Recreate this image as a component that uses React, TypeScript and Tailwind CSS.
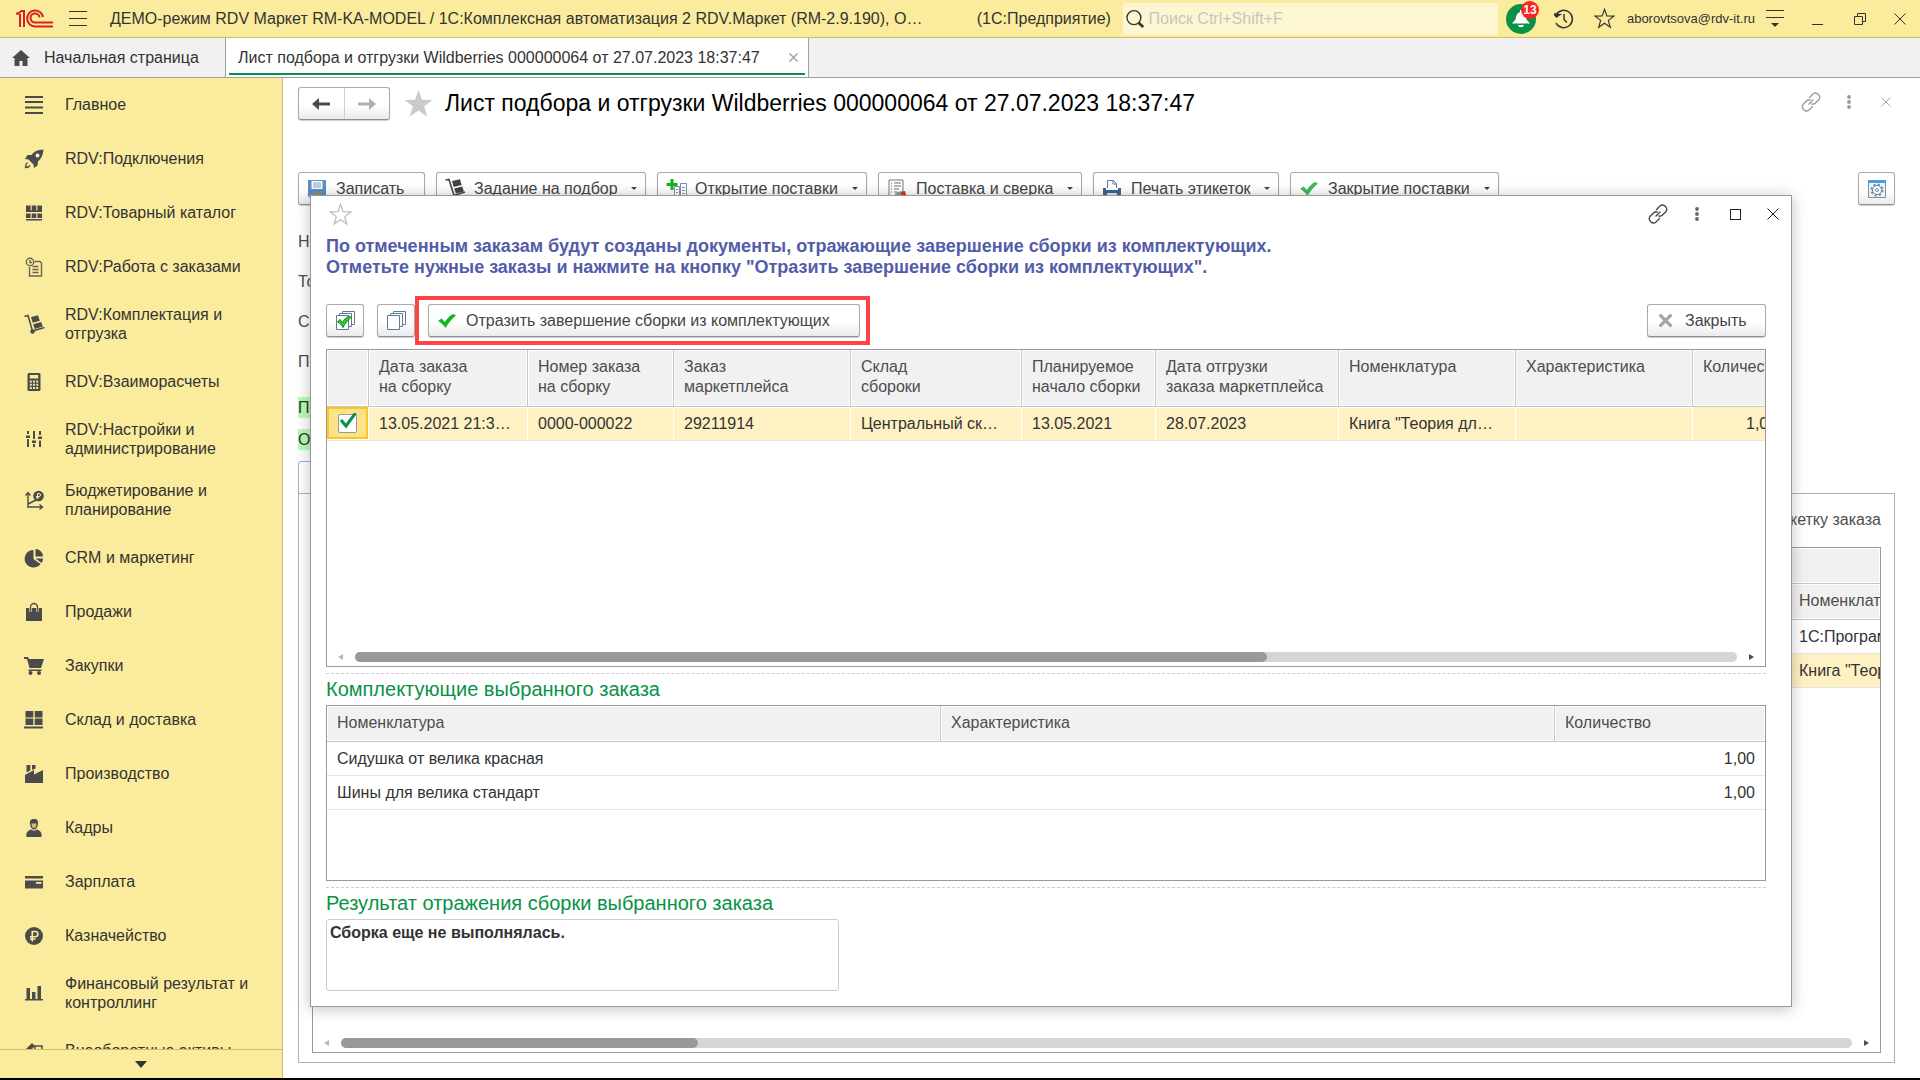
import React from 'react';

interface IconProps {
  className?: string;
}

interface MenuItem {
  label: string;
  icon: React.ReactNode;
}

const menuItems: MenuItem[] = [
  { label: 'Главное', icon: <path d="M0 0h18v2H0zM0 5h18v2H0zM0 10.500h18v2H0zM0 16h18v2H0z" /> },
  {
    label: 'RDV:Подключения',
    icon: (
      <>
        <path d="M18.500-.5c-6 .4-9.500 2-12 5.500L2.500 5 0 9l3.500.5 5 5 .5 3.500 3.500-2.500L13 11.500c3-2.500 5.200-6.500 5.500-12z" />
        <circle cx="12.500" cy="5.500" r="1.900" fill="#fff" />
        <path d="M2.500 12.500c-1.500 1-2 3-2 5 2 0 3.500-.5 4.500-2" fill="none" stroke="#4b4b4b" strokeWidth="1.400" />
      </>
    ),
  },
  {
    label: 'RDV:Товарный каталог',
    icon: <path d="M1 1.500h4.600v5H1zM6.700 1.500h4.600v5H6.700zM12.400 1.500H17v5h-4.600zM1 6.500h16V8H1zM1 9.500h4.600V14H1zM6.700 9.500h4.600V14H6.700zM12.400 9.500H17V14h-4.600zM1 15h16v1.500H1z" />,
  },
  {
    label: 'RDV:Работа с заказами',
    icon: (
      <g fill="none" stroke="#6b6550" strokeWidth="1.400">
        <circle cx="5" cy="4" r="3.700" />
        <path d="M5 2v2.500h2M9.500 3.500h5.500l1.500 1.500v13h-12V9M7.500 8.500h6M7.500 11.500h6M7.500 14.500h6" />
      </g>
    ),
  },
  {
    label: 'RDV:Комплектация и отгрузка',
    icon: (
      <>
        <path d="M-.5 1.500L3 .5l4.500 15.500 12-3.500" fill="none" stroke="#4b4b4b" strokeWidth="1.500" />
        <path d="M6 2l7-1.700 1.800 5.500L7.700 7.700zM8.200 9.300l8-2.200 1.600 4.500-8.200 2.500z" />
        <circle cx="7.500" cy="16.500" r="2.200" />
      </>
    ),
  },
  {
    label: 'RDV:Взаиморасчеты',
    icon: (
      <>
        <rect x="2.500" width="13" height="18" rx="1.500" />
        <path d="M4.800 2h8.400v3.500H4.800zM4.800 7.500h2v2h-2zM8 7.500h2v2H8zM11.200 7.500h2v2h-2zM4.800 10.800h2v2h-2zM8 10.800h2v2H8zM11.200 10.800h2v2h-2zM4.800 14h2v2h-2zM8 14h2v2H8zM11.200 14h2v2h-2z" fill="#fbec9d" />
      </>
    ),
  },
  {
    label: 'RDV:Настройки и администрирование',
    icon: <path d="M2 1h2v3H2zM1 5.500h4v2.500H1zM2 9h2v8H2zM8 1h2v8H8zM7 10.500h4V13H7zM8 14h2v3H8zM14 1h2v4h-2zM13 6.500h4V9h-4zM14 10.500h2V17h-2z" />,
  },
  {
    label: 'Бюджетирование и планирование',
    icon: (
      <>
        <path d="M3 17V2M.5 4.500L3 1.500l2.500 3M3 16h14M14.500 13.500L17.500 16l-3 2.500M3 13l9-4.500" fill="none" stroke="#4b4b4b" strokeWidth="1.400" />
        <circle cx="13.500" cy="5" r="5.300" />
        <path d="M12.500 7.800V2.500h1.500a1.500 1.500 0 010 3h-3M11 6.800h3" fill="none" stroke="#fbec9d" />
      </>
    ),
  },
  {
    label: 'CRM и маркетинг',
    icon: <path d="M8.500 1v9l7 5A8.800 8.800 0 118.500 1zM10.500 0A7.500 7.500 0 0118 7.500h-7.500zM10.500 9.500H18a7 7 0 01-1.500 4.500z" />,
  },
  {
    label: 'Продажи',
    icon: (
      <>
        <path d="M1 5h16v13H1z" />
        <path d="M5.500 8.500V4a3.500 3.500 0 017 0v4.500" fill="none" stroke="#fbec9d" strokeWidth="2.600" />
        <path d="M5.500 8V4a3.500 3.500 0 017 0v4" fill="none" stroke="#4b4b4b" strokeWidth="1.300" />
      </>
    ),
  },
  {
    label: 'Закупки',
    icon: (
      <>
        <path d="M-1 0h4l1 2h15l-3 9H4.500L2 2h-3zM3.500 12.500h13V14h-13z" />
        <circle cx="5.500" cy="16" r="2" />
        <circle cx="14" cy="16" r="2" />
      </>
    ),
  },
  { label: 'Склад и доставка', icon: <path d="M.5 0h7.800v6.500H.5zM9.700 0h7.800v6.500H9.700zM.5 7.500h7.800V14H.5zM9.700 7.500h7.800V14H9.700zM-1 15.500h19v2H-1z" /> },
  { label: 'Производство', icon: <path d="M1.500 0h3.800v5.500L1.500 7.500zM7 0h3.500v3.500L7 5zM0 18V10l9-5v4.500L18 5v13z" /> },
  {
    label: 'Кадры',
    icon: (
      <>
        <path d="M9 0c3.500 0 4.500 2 4 5-.4 3.500-2 5.500-4 5.500S5.400 8.500 5 5C4.500 2 5.500 0 9 0zM1.500 18c-.5-4 .5-6 4.500-7.500 2 1.500 4 1.500 6 0 4 1.500 5 3.500 4.500 7.500z" />
        <path d="M6.500 4.500h5c0 3-1 4.500-2.500 4.500S6.500 7.500 6.500 4.500z" fill="#c9be83" />
      </>
    ),
  },
  {
    label: 'Зарплата',
    icon: (
      <>
        <path d="M0 3h18v2.500H0zM0 7.500h18v8H0z" />
        <path d="M11 9h5.500v1.800H11z" fill="#fbec9d" />
      </>
    ),
  },
  {
    label: 'Казначейство',
    icon: (
      <>
        <circle cx="9" cy="9" r="9" />
        <path d="M7.300 14.500V4.500h3a2.600 2.600 0 010 5.200H5M5 12h5.500" fill="none" stroke="#fbec9d" strokeWidth="1.600" />
      </>
    ),
  },
  { label: 'Финансовый результат и контроллинг', icon: <path d="M1.500 4H5v11H1.500zM7 8h3.500v7H7zM12.500 2H16v13h-3.500zM0 15h18v1.500H0z" /> },
  {
    label: 'Внеоборотные активы',
    icon: (
      <>
        <path d="M1 7l6-6 3 3-6 6z" />
        <path d="M10 4h7v6h-7z" fill="none" stroke="#4b4b4b" strokeWidth="1.500" />
      </>
    ),
  },
];

const GRAY_BTN =
  'flex h-[33px] shrink-0 items-center rounded-[3px] border border-[#aaa] border-b-[#8f8f8f] bg-linear-to-b from-white from-55% to-[#ebebeb] text-[#444] shadow-[0_1px_1px_rgba(0,0,0,0.2)]';

const LogoIcon = () => (
  <svg width="38" height="20" viewBox="0 0 38 20" fill="none" stroke="#d8201f" strokeWidth="2">
    <path d="M0 4.500h3M4 18V5M1 5.500L5.500 2H8v16" />
    <path d="M27 8A8 8 0 1019 17.500h18" />
    <path d="M23.500 8.500a4.500 4.500 0 10-4.500 5h18" />
  </svg>
);

const LinkIcon = ({ className }: IconProps) => (
  <svg width="20" height="20" viewBox="0 0 20 20" className={className} fill="none" stroke="currentColor" strokeWidth="1.300" strokeLinecap="round">
    <path d="M8.500 5.500L12 2c3.500-3 8.500 2 6 5.500L14.500 11c-1.200 1.200-2.500 1.500-4 1" />
    <path d="M11.500 14.500L8 18c-3.500 3-8.500-2-6-5.500L5.500 9c1-1 2.500-1.500 4-1" />
    <path d="M8 12l4-4" />
  </svg>
);

const DotsIcon = ({ className }: IconProps) => (
  <svg width="4" height="14" viewBox="0 0 4 14" className={className} fill="currentColor">
    <circle cx="2" cy="2" r="1.900" />
    <circle cx="2" cy="7" r="1.900" />
    <circle cx="2" cy="12" r="1.900" />
  </svg>
);

const CrossIcon = ({ className }: IconProps) => (
  <svg viewBox="0 0 12 12" className={className} fill="none" stroke="currentColor">
    <path d="M.5.5l11 11M11.500.5l-11 11" />
  </svg>
);

const StarIcon = ({ className }: IconProps) => (
  <svg viewBox="0 0 24 24" className={className} strokeWidth="1.300">
    <path d="M12 1.500l2.700 7.600 8 .2-6.300 4.900 2.300 7.800-6.700-4.600L5.300 22l2.300-7.800L1.300 9.300l8-.2z" />
  </svg>
);

const CheckIcon = ({ className }: IconProps) => (
  <svg width="18" height="14" viewBox="0 0 18 14" className={className} fill="currentColor">
    <path d="M0 7l3.500-2.500L7 8c2-3.500 4.500-6 8-8l3 1.500C13.500 5 10.500 9 7.500 14 5.500 11 3 8.500 0 7z" />
  </svg>
);

const StackIcon = ({ checked }: { checked?: boolean }) => (
  <svg width="19" height="19" viewBox="0 0 19 19" fill="#fff" stroke="#5b7c96">
    <path d="M6.500.5h12v13h-12z" />
    <path d="M3.500 2.500h12v13h-12z" />
    <path d="M.5 4.500h12v14H.5z" />
    {checked && <path d="M1.500 11l2.500-2.500 2.500 3c1.500-3 4-5.500 7-6.500l1.500 1.500c-3.500 2.500-6 6-8 10-1.500-2.500-3-4.500-5.500-5.500z" fill="#2fd321" stroke="#127a0c" />}
  </svg>
);

const toolbar = [
  {
    label: 'Записать',
    width: 'w-[127px]',
    menu: false,
    icon: (
      <>
        <path d="M0 0h18v18H2l-2-2z" fill="#5b8ec4" />
        <path d="M3.500 1h11v8h-11z" fill="#fff" />
        <path d="M5 3h8M5 5h8M5 7h8" stroke="#7a9dc0" />
        <path d="M4 12h10v6H4z" fill="#8a8a8a" />
      </>
    ),
  },
  {
    label: 'Задание на подбор',
    width: 'w-[210px]',
    menu: true,
    icon: (
      <>
        <path d="M-.5 0L3-.5l5 16 11-3.500" fill="none" stroke="#444" strokeWidth="1.600" />
        <path d="M6 1l8-1.700 1.700 5.700-8 2zM8.200 8.500l8-2 1.700 5-8 2z" fill="#444" />
        <circle cx="8" cy="16.500" r="2" fill="#555" />
      </>
    ),
  },
  {
    label: 'Открытие поставки',
    width: 'w-[210px]',
    menu: true,
    icon: (
      <>
        <path d="M7.500 6.500h5v13h-5zM13.500 3.500h6v16h-6z" fill="#fff" stroke="#8094a6" />
        <path d="M9 9.500h2M9 12.500h2M15 7.500h3M15 10.500h3M15 13.500h3" stroke="#8094a6" />
        <path d="M3.500-1h3v4h4v3h-4v4h-3V6h-4V3h4z" fill="#16b41c" />
      </>
    ),
  },
  {
    label: 'Поставка и сверка',
    width: 'w-[204px]',
    menu: true,
    icon: (
      <>
        <path d="M1 0h14v18H1z" fill="#fff" stroke="#777" />
        <path d="M3 3h1M3 6h1M3 9h1M3 12h1M6 3h7M6 6h7M6 9h5M6 12h3" stroke="#777" />
        <path d="M7 14l2-2 6-1v7H7z" fill="#999" />
        <path d="M13 12l4-1 2 7h-6z" fill="#e03020" />
      </>
    ),
  },
  {
    label: 'Печать этикеток',
    width: 'w-[186px]',
    menu: true,
    icon: (
      <>
        <path d="M4.500 8V.5h6l3 3V8" fill="#fff" stroke="#55779b" />
        <path d="M10 .5V4h3.500" fill="none" stroke="#55779b" />
        <path d="M0 8h3v2h12V8h3v8H0z" fill="#3f668e" />
        <path d="M4 13h10v5H4z" fill="#dfe8f0" />
      </>
    ),
  },
  {
    label: 'Закрытие поставки',
    width: 'w-[209px]',
    menu: true,
    icon: <path d="M0 9l3.500-2.500L7 10c2-3.500 4.500-6 8-8l3 1.500C13.500 7 10.500 11 7.500 16 5.500 13 3 10.500 0 9z" fill="#3cbc52" />,
  },
];

const orderColumns = [
  { title: ['Дата заказа', 'на сборку'], value: '13.05.2021 21:3…', width: 'w-[159px]' },
  { title: ['Номер заказа', 'на сборку'], value: '0000-000022', width: 'w-[146px]' },
  { title: ['Заказ', 'маркетплейса'], value: '29211914', width: 'w-[177px]' },
  { title: ['Склад', 'сбороки'], value: 'Центральный ск…', width: 'w-[171px]' },
  { title: ['Планируемое', 'начало сборки'], value: '13.05.2021', width: 'w-[134px]' },
  { title: ['Дата отгрузки', 'заказа маркетплейса'], value: '28.07.2023', width: 'w-[183px]' },
  { title: ['Номенклатура'], value: 'Книга "Теория дл…', width: 'w-[177px]' },
  { title: ['Характеристика'], value: '', width: 'w-[177px]' },
];

const parts = [
  { name: 'Сидушка от велика красная', count: '1,00' },
  { name: 'Шины для велика стандарт', count: '1,00' },
];

const TH = 'border-r border-b border-[#c6c6c6] bg-[#f1f1f1] text-left align-top font-normal text-[#4d4d4d] shadow-[inset_0_0_0_1px_#fff]';

const ScrollBar = ({ thumb }: { thumb: string }) => (
  <div className="flex h-[10px] items-center gap-3 px-[11px]">
    <span className="h-0 w-0 border-y-[3px] border-r-[5px] border-y-transparent border-r-[#b5b5b5]" />
    <div className="h-[10px] flex-1 rounded-full bg-[#d5d5d5]">
      <div className={`h-[10px] rounded-full bg-[#999] ${thumb}`} />
    </div>
    <span className="h-0 w-0 border-y-[3px] border-l-[5px] border-y-transparent border-l-[#4d4d4d]" />
  </div>
);

const TitleBar = () => (
  <header className="flex h-[38px] shrink-0 items-center border-b border-[#cdbd6c] bg-[#fbec9d] text-[#333]">
    <div className="ml-4 w-[38px]">
      <LogoIcon />
    </div>
    <button aria-label="Меню" className="ml-[15px] flex w-[18px] flex-col gap-[6px]">
      <span className="h-px bg-[#333]" />
      <span className="h-px bg-[#333]" />
      <span className="h-px bg-[#333]" />
    </button>
    <h1 className="ml-[23px] whitespace-nowrap">ДЕМО-режим RDV Маркет RM-KA-MODEL / 1С:Комплексная автоматизация 2 RDV.Маркет (RM-2.9.190), О…</h1>
    <span className="ml-auto whitespace-nowrap">(1С:Предприятие)</span>
    <label className="ml-3 flex h-8 w-[375px] shrink-0 items-center rounded-[3px] bg-[#fdf6d3]">
      <svg width="20" height="20" viewBox="0 0 20 20" fill="none" stroke="#333" className="ml-[3px]">
        <circle cx="8.500" cy="8.500" r="7.500" strokeWidth="1.500" />
        <path d="M13.500 14l5 4.500" strokeWidth="3" />
      </svg>
      <input type="text" aria-label="Поиск" placeholder="Поиск Ctrl+Shift+F" className="ml-1 w-full bg-transparent outline-none placeholder:text-[#c9c6b8]" />
    </label>
    <button aria-label="Оповещения" className="relative ml-2 flex h-[30px] w-[30px] items-center justify-center rounded-full bg-[#079247]">
      <svg width="18" height="18" viewBox="0 0 18 18" fill="#fff">
        <path d="M8 0h2v2c3 1 4 4 4.500 7.500l3.500 4H0l3.500-4C4 6 5 3 8 2zM6 15h6c-.5 3-5.500 3-6 0z" />
      </svg>
      <span className="absolute -top-[3px] left-[15px] flex h-[18px] w-[18px] items-center justify-center rounded-full bg-[#f22] text-[12px] font-bold text-white">13</span>
    </button>
    <button aria-label="История" className="ml-[18px]">
      <svg width="20" height="20" viewBox="0 0 20 20" fill="none" stroke="#333" strokeWidth="1.500">
        <path d="M2 6a8.700 8.700 0 110 8" />
        <path d="M0 5l2.500 3L6 5.500z" fill="#333" />
        <path d="M10 5v5.500l3 3" />
      </svg>
    </button>
    <button aria-label="Избранное" className="ml-5">
      <StarIcon className="h-[21px] w-[21px] fill-none stroke-[#333]" />
    </button>
    <span className="ml-3 text-[13px] whitespace-nowrap">aborovtsova@rdv-it.ru</span>
    <button aria-label="Сервис" className="ml-[11px] flex w-[18px] flex-col items-center gap-[6px]">
      <span className="h-px w-full bg-[#333]" />
      <span className="h-px w-full bg-[#333]" />
      <span className="-mt-px border-x-4 border-t-4 border-x-transparent border-t-[#333]" />
    </button>
    <button aria-label="Свернуть" className="ml-7 flex h-[12px] w-[11px] items-end">
      <span className="h-px w-full bg-[#333]" />
    </button>
    <button aria-label="Развернуть" className="ml-[31px]">
      <svg width="12" height="12" viewBox="0 0 12 12" fill="none" stroke="#333">
        <path d="M.5 3.500h8v8h-8zM3.500 3.500v-3h8v8h-3" />
      </svg>
    </button>
    <button aria-label="Закрыть программу" className="mr-[14px] ml-7">
      <CrossIcon className="h-3 w-3 text-[#333]" />
    </button>
  </header>
);

const TabsBar = () => (
  <nav className="flex h-10 shrink-0 border-b border-[#a0a0a0] bg-[#f1f1f1] text-[#333]">
    <a href="#home" className="flex w-[226px] items-center border-r border-[#a0a0a0] pl-3">
      <svg width="18" height="16" viewBox="0 0 18 16" fill="#4b4b4b">
        <path d="M9 0l9 8h-2.500v8h-5v-5h-3v5h-5V8H0z" />
      </svg>
      <span className="ml-[14px]">Начальная страница</span>
    </a>
    <div className="flex w-[583px] flex-col border-r border-[#a0a0a0] bg-white px-[3px]">
      <div className="flex flex-1 items-center pt-1 pl-[9px]">
        <a href="#sheet" className="whitespace-nowrap">Лист подбора и отгрузки Wildberries 000000064 от 27.07.2023 18:37:47</a>
        <button aria-label="Закрыть вкладку" className="ml-auto mr-[7px]">
          <CrossIcon className="h-[9px] w-[9px] stroke-2 text-[#a5a5a5]" />
        </button>
      </div>
      <div className="mb-[2px] h-[2px] bg-[#079247]" />
    </div>
  </nav>
);

const Sidebar = () => (
  <aside className="flex w-[283px] shrink-0 flex-col border-r border-[#cdbd6c] bg-[#fbec9d] text-[#333]">
    <ul className="min-h-0 flex-1 overflow-hidden">
      {menuItems.map((item) => (
        <li key={item.label}>
          <a href="#section" className="flex min-h-[54px] items-center pt-[11px] pr-4 pb-3 pl-[25px] leading-[19px]">
            <svg width="18" height="18" viewBox="0 0 18 18" fill="#4b4b4b" className="shrink-0 overflow-visible">
              {item.icon}
            </svg>
            <span className="ml-[22px]">{item.label}</span>
          </a>
        </li>
      ))}
    </ul>
    <button aria-label="Прокрутить вниз" className="flex h-[29px] shrink-0 items-center justify-center border-t border-[#cdbd6c]">
      <span className="border-x-[6px] border-t-[7px] border-x-transparent border-t-[#333]" />
    </button>
  </aside>
);

const OrdersTable = () => (
  <div className="flex h-[318px] shrink-0 flex-col overflow-hidden border border-[#999]">
    <table className="w-[1543px] table-fixed border-separate border-spacing-0">
      <thead>
        <tr className="h-[57px] leading-5">
          <th aria-label="Отметка" className={`w-[42px] ${TH}`} />
          {orderColumns.map((col) => (
            <th key={col.title.join()} className={`${col.width} ${TH} pt-[7px] pl-[10px] whitespace-nowrap`}>
              {col.title.map((line) => (
                <div key={line}>{line}</div>
              ))}
            </th>
          ))}
          <th className={`w-[177px] ${TH} pt-[7px] pl-[10px]`}>Количество</th>
        </tr>
      </thead>
      <tbody>
        <tr className="h-[34px] text-[#333]">
          <td className="border-r border-b border-r-white border-b-[#e4e4e4] pb-px">
            <div className="relative flex h-8 items-center justify-center border-2 border-[#f8c820] bg-[#fde28c]">
              <input type="checkbox" defaultChecked aria-label="Выбрать заказ" className="h-[19px] w-[19px] appearance-none rounded-[2px] border border-[#999] bg-white" />
              <svg width="17" height="16" viewBox="0 0 17 16" className="pointer-events-none absolute top-[4px] left-[11px]" fill="none" stroke="#079247" strokeWidth="3">
                <path d="M1 7l5 6L15.500 0" />
              </svg>
            </div>
          </td>
          {orderColumns.map((col) => (
            <td key={col.title.join()} className="border-r border-b border-r-white border-b-[#e4e4e4] bg-[#fef1c4] pl-[10px] whitespace-nowrap shadow-[inset_0_1px_0_#fff]">
              {col.value}
            </td>
          ))}
          <td className="border-b border-[#e4e4e4] bg-[#fef1c4] pl-[53px]">1,00</td>
        </tr>
      </tbody>
    </table>
    <div className="mt-auto mb-1">
      <ScrollBar thumb="w-[66%]" />
    </div>
  </div>
);

const PartsTable = () => (
  <div className="h-[176px] shrink-0 border border-[#999]">
    <table className="w-full table-fixed border-separate border-spacing-0">
      <thead>
        <tr className="h-9">
          <th className={`${TH} pt-[5px] pl-[10px]`}>Номенклатура</th>
          <th className={`${TH} pt-[5px] pl-[10px]`}>Характеристика</th>
          <th className={`w-[210px] ${TH} border-r-0 pt-[5px] pl-[10px]`}>Количество</th>
        </tr>
      </thead>
      <tbody>
        {parts.map((part) => (
          <tr key={part.name} className="h-[34px] text-[#333]">
            <td className="border-b border-[#e4e4e4] pl-[10px]">{part.name}</td>
            <td className="border-b border-[#e4e4e4]" />
            <td className="border-b border-[#e4e4e4] pr-[10px] text-right">{part.count}</td>
          </tr>
        ))}
      </tbody>
    </table>
  </div>
);

const AssemblyDialog = () => (
  <section role="dialog" aria-label="Завершение сборки" className="absolute top-[117px] right-[128px] bottom-[71px] left-[27px] flex flex-col overflow-hidden border border-[#999] bg-white pr-[25px] pl-[15px] shadow-[0_2px_14px_rgba(0,0,0,0.25)]">
    <div className="-mr-[13px] flex h-9 shrink-0 items-center">
      <button aria-label="В избранное">
        <StarIcon className="ml-[3px] h-[23px] w-[23px] fill-none stroke-[#b9bcc2]" />
      </button>
      <div className="ml-auto flex items-center text-[#444]">
        <button aria-label="Ссылка">
          <LinkIcon />
        </button>
        <button aria-label="Ещё" className="ml-[27px]">
          <DotsIcon className="text-[#666]" />
        </button>
        <button aria-label="Развернуть окно" className="ml-[31px] h-[11px] w-[11px] border border-[#222]" />
        <button aria-label="Закрыть окно" className="ml-[26px]">
          <CrossIcon className="h-3 w-3 text-[#222]" />
        </button>
      </div>
    </div>
    <p className="mt-1 text-[18px] leading-[21px] font-bold text-[#535ca8]">
      По отмеченным заказам будут созданы документы, отражающие завершение сборки из комплектующих.
      <br />
      Отметьте нужные заказы и нажмите на кнопку "Отразить завершение сборки из комплектующих".
    </p>
    <div className="mt-[18px] mb-1 flex h-[49px] shrink-0 items-center">
      <button aria-label="Отметить все" className={`${GRAY_BTN} w-[38px] justify-center`}>
        <StackIcon checked />
      </button>
      <button aria-label="Снять отметки" className={`${GRAY_BTN} ml-[13px] w-[38px] justify-center`}>
        <StackIcon />
      </button>
      <div className="flex h-[49px] items-center border-4 border-[#ff4444] pr-[6px] pl-[9px]">
        <button className={`${GRAY_BTN} w-[432px] pl-[9px]`}>
          <CheckIcon className="text-[#14b41e]" />
          <span className="ml-[10px]">Отразить завершение сборки из комплектующих</span>
        </button>
      </div>
      <button className={`${GRAY_BTN} ml-auto w-[119px] pl-[11px]`}>
        <CrossIcon className="h-[13px] w-[13px] stroke-3 text-[#a5a5a5]" />
        <span className="ml-[13px]">Закрыть</span>
      </button>
    </div>
    <OrdersTable />
    <div className="mt-[6px] border-t border-dashed border-[#ccc]" />
    <h3 className="my-[4px] text-[20px] leading-[23px] text-[#079247]">Комплектующие выбранного заказа</h3>
    <PartsTable />
    <div className="mt-[6px] border-t border-dashed border-[#ccc]" />
    <h3 className="my-[4px] text-[20px] leading-[23px] text-[#079247]">Результат отражения сборки выбранного заказа</h3>
    <textarea readOnly aria-label="Результат" defaultValue="Сборка еще не выполнялась." className="block h-[72px] w-[513px] shrink-0 resize-none rounded-[3px] border border-[#ccc] px-[3px] py-px font-bold text-[#333] outline-none" />
  </section>
);

const DocumentForm = () => (
  <div className="flex h-full flex-col overflow-hidden pr-[25px] pb-[15px] pl-[15px]">
    <div className="mt-[10px] flex h-[31px] shrink-0 items-center">
      <div className={`${GRAY_BTN} w-[92px]`}>
        <button aria-label="Назад" className="flex h-full flex-1 items-center justify-center border-r border-[#d0d0d0]">
          <svg width="18" height="12" viewBox="0 0 18 12" fill="#4b4b4b">
            <path d="M0 6l7-6v4.500h11v3H7V12z" />
          </svg>
        </button>
        <button aria-label="Вперед" className="flex h-full flex-1 items-center justify-center">
          <svg width="18" height="12" viewBox="0 0 18 12" fill="#b0b0b0">
            <path d="M18 6l-7-6v4.500H0v3h11V12z" />
          </svg>
        </button>
      </div>
      <StarIcon className="ml-[13px] h-[31px] w-[31px] fill-[#c9cacc]" />
      <h2 className="ml-[11px] text-[23px] whitespace-nowrap text-black">Лист подбора и отгрузки Wildberries 000000064 от 27.07.2023 18:37:47</h2>
      <div className="mr-1 mb-[3px] ml-auto flex items-center text-[#999]">
        <button aria-label="Ссылка на документ">
          <LinkIcon />
        </button>
        <button aria-label="Действия" className="ml-[26px]">
          <DotsIcon />
        </button>
        <button aria-label="Закрыть документ" className="ml-[30px]">
          <CrossIcon className="h-[10px] w-[10px]" />
        </button>
      </div>
    </div>
    <div className="mt-[53px] flex shrink-0 gap-[11px]">
      {toolbar.map((item) => (
        <button key={item.label} className={`${GRAY_BTN} ${item.width} pl-[9px] whitespace-nowrap`}>
          <svg width="18" height="18" viewBox="0 0 18 18" className="shrink-0 overflow-visible">
            {item.icon}
          </svg>
          <span className="ml-[10px]">{item.label}</span>
          {item.menu && <span className="mr-2 ml-auto border-x-[3px] border-t-[3px] border-x-transparent border-t-[#444]" />}
        </button>
      ))}
      <button aria-label="Настройки" className={`${GRAY_BTN} ml-auto w-[37px] justify-center`}>
        <svg width="18" height="18" viewBox="0 0 18 18" fill="none">
          <path d="M.5.5h17v17H.5z" fill="#eef4f9" stroke="#7590a8" />
          <path d="M0 0h18v3H0z" fill="#4a9ae0" />
          <circle cx="9" cy="10" r="5.500" stroke="#6b879e" strokeWidth="2" strokeDasharray="2.160 2.160" />
          <circle cx="9" cy="10" r="4.500" fill="#fff" stroke="#6b879e" />
          <circle cx="9" cy="10" r="1.500" stroke="#6b879e" />
        </svg>
      </button>
    </div>
    <div className="mt-[17px] flex flex-col items-start leading-10 text-[#4d4d4d]">
      <span>Но</span>
      <span>То</span>
      <span>С</span>
      <span>По</span>
    </div>
    <div className="mt-[15px] flex flex-col items-start gap-[11px] leading-[21px] text-[#333]">
      <span className="bg-[#b9fdb9]">По</span>
      <span className="bg-[#b9fdb9]">От</span>
    </div>
    <div className="mt-[11px] h-8 w-[120px] shrink-0 rounded-t-[3px] border border-b-0 border-[#b0b0b0]" />
    <div className="flex min-h-0 flex-1 flex-col border border-[#b0b0b0] pr-[13px] pb-[9px] pl-[13px]">
      <div className="flex h-[53px] shrink-0 items-center justify-end pb-[2px] text-[#4d4d4d]">Напечатать этикетку заказа</div>
      <div className="flex min-h-0 flex-1 flex-col overflow-hidden border border-[#999]">
        <table className="w-full table-fixed border-separate border-spacing-0">
          <colgroup>
            <col />
            <col className="w-[91px]" />
          </colgroup>
          <thead>
            <tr className="h-9">
              <th colSpan={2} className={`${TH} border-r-0`} />
            </tr>
            <tr className="h-9">
              <th className={TH} />
              <th className={`${TH} overflow-hidden border-r-0 pt-[5px] pl-[10px]`}>Номенклатура</th>
            </tr>
          </thead>
          <tbody className="text-[#333]">
            <tr className="h-[34px]">
              <td className="border-b border-[#e4e4e4]" />
              <td className="overflow-hidden border-b border-[#e4e4e4] pl-[10px] whitespace-nowrap">1С:Программа</td>
            </tr>
            <tr className="h-[34px] bg-[#fef1c4]">
              <td className="border-b border-[#e4e4e4]" />
              <td className="overflow-hidden border-b border-[#e4e4e4] pl-[10px] whitespace-nowrap">Книга "Теория</td>
            </tr>
          </tbody>
        </table>
        <div className="mt-auto mb-1">
          <ScrollBar thumb="w-[357px]" />
        </div>
      </div>
    </div>
  </div>
);

const App: React.FC = () => {
  return (
    <div className="flex h-screen flex-col overflow-hidden border-b-2 border-black bg-white font-['Liberation_Sans',Arial,sans-serif] text-[16px]">
      <TitleBar />
      <TabsBar />
      <div className="flex min-h-0 flex-1">
        <Sidebar />
        <main className="relative min-w-0 flex-1">
          <DocumentForm />
          <AssemblyDialog />
        </main>
      </div>
    </div>
  );
};

export default App;
